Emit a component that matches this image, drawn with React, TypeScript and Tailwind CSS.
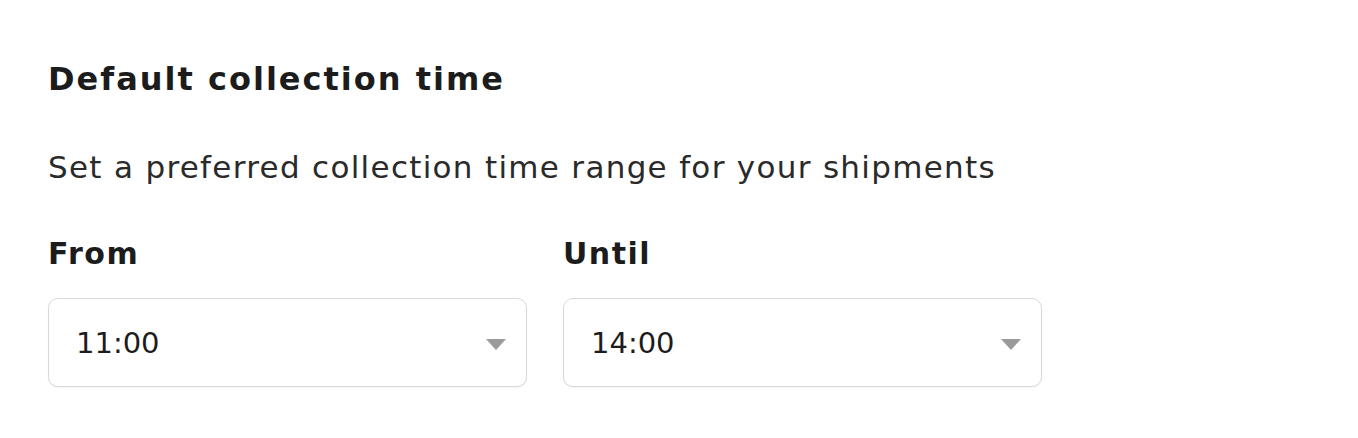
const font = { fontFamily: '"DejaVu Sans", "Liberation Sans", sans-serif' };

type SelectProps = {
  label: string;
  value: string;
};

const TimeSelect = ({ label, value }: SelectProps) => (
  <div className="flex flex-col">
    <label className="mb-[26px] text-[30px] font-bold leading-[36px] tracking-[1.5px] text-[#1c1c1c]">
      {label}
    </label>
    <div className="flex h-[89px] w-[479px] items-center justify-between rounded-[10px] border border-[#d9d9d9] bg-white pl-[27px] pr-[20px] shadow-[0_1px_2px_rgba(0,0,0,0.06)]">
      <span className="text-[29px] leading-[40px] text-[#1c1c1c]">{value}</span>
      <svg width="20" height="12" viewBox="0 0 20 12" className="mt-[4px]">
        <path d="M0 0 L20 0 L10 11 Z" fill="#9a9a9a" />
      </svg>
    </div>
  </div>
);

export default function App() {
  return (
    <div className="min-h-screen bg-white px-[48px] pt-[59px]" style={font}>
      <h2 className="text-[32px] font-bold leading-[40px] tracking-[2px] text-[#1c1c1c]">
        Default collection time
      </h2>
      <p className="mt-[48px] text-[31px] leading-[40px] tracking-[1.3px] text-[#2a2a2a]">
        Set a preferred collection time range for your shipments
      </p>
      <div className="mt-[49px] flex gap-[36px]">
        <TimeSelect label="From" value="11:00" />
        <TimeSelect label="Until" value="14:00" />
      </div>
    </div>
  );
}
